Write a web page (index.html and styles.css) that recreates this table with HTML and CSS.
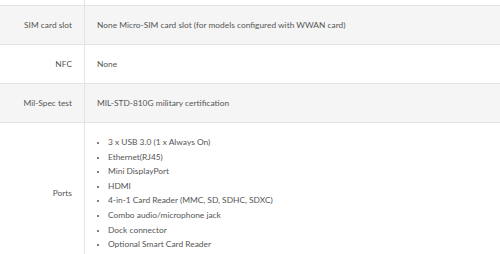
FILE: index.html
```html
<!DOCTYPE html>
<html>
<head>
<meta charset="utf-8">
<link rel="stylesheet" href="styles.css">
</head>
<body>
<table class="specs">
  <tr class="row-tail"><th></th><td></td></tr>
  <tr class="row-alt"><th>SIM card slot</th><td>None Micro-SIM card slot (for models configured with WWAN card)</td></tr>
  <tr><th>NFC</th><td>None</td></tr>
  <tr class="row-alt"><th>Mil-Spec test</th><td>MIL-STD-810G military certification</td></tr>
  <tr class="row-list">
    <th>Ports</th>
    <td>
      <ul class="list">
        <li>3 x USB 3.0 (1 x Always On)</li>
        <li>Ethernet(RJ45)</li>
        <li>Mini DisplayPort</li>
        <li>HDMI</li>
        <li>4-in-1 Card Reader (MMC, SD, SDHC, SDXC)</li>
        <li>Combo audio/microphone jack</li>
        <li>Dock connector</li>
        <li>Optional Smart Card Reader</li>
      </ul>
    </td>
  </tr>
</table>
</body>
</html>
```

FILE: styles.css
```css
html, body {
  margin: 0;
  padding: 0;
  background: #fff;
}
.specs {
  width: 100%;
  border-collapse: collapse;
  font-family: Lato, "Open Sans", sans-serif;
  font-size: 8.4px;
  color: #555;
}
.specs th,
.specs td {
  border-bottom: 1px solid #e4e4e4;
  height: 38px;
  padding: 0;
  vertical-align: middle;
  font-weight: normal;
}
.specs th {
  width: 72px;
  padding-right: 12px;
  text-align: right;
  border-right: 1px solid #e4e4e4;
}
.specs td {
  padding-left: 12px;
  text-align: left;
}
.row-alt th,
.row-alt td {
  background: #f5f5f5;
}
.row-tail th,
.row-tail td {
  height: 5px;
}
.row-list td {
  padding-top: 12px;
  padding-bottom: 12px;
}
.list {
  margin: 0;
  padding: 0 0 0 11px;
  list-style: disc;
  line-height: 14.6px;
}
.list li::marker {
  font-size: 7px;
}
```
